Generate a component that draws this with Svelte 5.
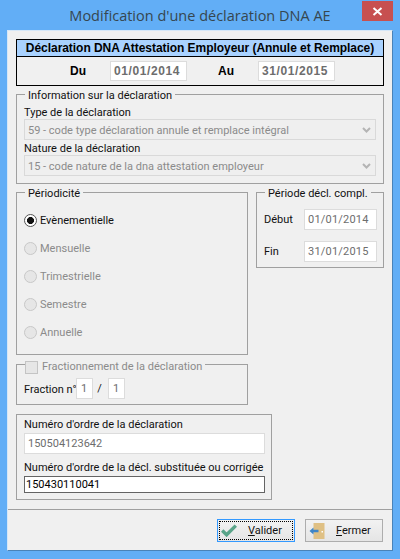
<script>
  const periods = [
    { label: 'Evènementielle', checked: true },
    { label: 'Mensuelle' },
    { label: 'Trimestrielle' },
    { label: 'Semestre' },
    { label: 'Annuelle' }
  ];
</script>

<div class="window">
  <header class="titlebar">
    <span class="title">Modification d'une déclaration DNA AE</span>
    <span class="close">
      <svg width="11" height="9" viewBox="0 0 11 9"><path d="M1.5 1 L9.5 8 M9.5 1 L1.5 8" stroke="#fff" stroke-width="2" /></svg>
    </span>
  </header>

  <div class="client">
    <div class="body">
      <section class="head">
        <h1>Déclaration DNA Attestation Employeur (Annule et Remplace)</h1>
        <div class="dates">
          <b class="du">Du</b>
          <span class="input bold">01/01/2014</span>
          <b class="au">Au</b>
          <span class="input bold">31/01/2015</span>
        </div>
      </section>

      <fieldset class="info">
        <legend>Information sur la déclaration</legend>
        <div class="lbl">Type de la déclaration</div>
        <div class="combo">
          59 - code type déclaration annule et remplace intégral
          <svg width="9" height="6" viewBox="0 0 9 6"><path d="M1 1 L4.5 4.5 L8 1" fill="none" stroke="#b4b4b4" stroke-width="2" /></svg>
        </div>
        <div class="lbl next">Nature de la déclaration</div>
        <div class="combo">
          15 - code nature de la dna attestation employeur
          <svg width="9" height="6" viewBox="0 0 9 6"><path d="M1 1 L4.5 4.5 L8 1" fill="none" stroke="#b4b4b4" stroke-width="2" /></svg>
        </div>
      </fieldset>

      <div class="columns">
        <fieldset class="period">
          <legend>Périodicité</legend>
          {#each periods as p}
            <div class="radio" class:off={!p.checked}>
              <span class="dot" class:on={p.checked}></span>{p.label}
            </div>
          {/each}
        </fieldset>
        <fieldset class="compl">
          <legend>Période décl. compl.</legend>
          <div class="row"><span>Début</span><span class="input small">01/01/2014</span></div>
          <div class="row"><span>Fin</span><span class="input small">31/01/2015</span></div>
        </fieldset>
      </div>

      <fieldset class="fraction">
        <legend><span class="check"></span>Fractionnement de la déclaration</legend>
        <div class="frow">
          <span class="fname">Fraction n°</span>
          <span class="input num">1</span>
          <span class="slash">/</span>
          <span class="input num">1</span>
        </div>
      </fieldset>

      <section class="numbers">
        <div class="lab">Numéro d'ordre de la déclaration</div>
        <div class="input wide">150504123642</div>
        <div class="lab second">Numéro d'ordre de la décl. substituée ou corrigée</div>
        <div class="input wide active">150430110041</div>
      </section>
    </div>

    <footer class="actions">
      <div class="btn focus">
        <span class="ring">
          <svg class="ico" width="16" height="13" viewBox="0 0 16 13"><path d="M1.2 6.5 L5.6 10.8 L14.8 1.6" fill="none" stroke="#5aa58a" stroke-width="3.4" /></svg>
          <span class="cap"><u>V</u>alider</span>
        </span>
      </div>
      <div class="btn">
        <span class="ring">
          <svg class="ico" width="15" height="16" viewBox="0 0 15 16">
            <rect x="4" y="0" width="11" height="16" fill="#dfc084" />
            <rect x="12" y="8" width="1.5" height="1.5" fill="#fff" />
            <path d="M0 8 L4 4.5 L4 6.8 L9 6.8 L9 9.2 L4 9.2 L4 11.5 Z" fill="#3f85c6" />
          </svg>
          <span class="cap"><u>F</u>ermer</span>
        </span>
      </div>
    </footer>
  </div>
</div>

<style>
  :global(body) {
    margin: 0;
  }
  .window {
    width: 400px;
    height: 559px;
    box-sizing: border-box;
    background: #62aef6;
    padding: 0 7px 8px;
    display: flex;
    flex-direction: column;
    font-family: Roboto, 'Liberation Sans', sans-serif;
    font-size: 11px;
    color: #111;
    position: relative;
  }
  .titlebar {
    height: 30px;
    flex: none;
    display: flex;
    justify-content: center;
    align-items: center;
  }
  .title {
    font-family: 'Open Sans', sans-serif;
    font-size: 14.5px;
    color: #36464f;
    padding-top: 1px;
  }
  .close {
    position: absolute;
    top: 1px;
    right: 7px;
    width: 31px;
    height: 20px;
    background: #c75050;
    display: flex;
    align-items: center;
    justify-content: center;
  }
  .client {
    flex: 1;
    display: flex;
    flex-direction: column;
    background: #f0f0f0;
    border: 1px solid #d5e7f8;
    border-right-color: #4a83b8;
    border-bottom-color: #4a83b8;
    min-height: 0;
  }
  .body {
    flex: 1;
    padding: 8px 8px 0;
    display: flex;
    flex-direction: column;
  }
  .head {
    height: 47px;
    flex: none;
    box-sizing: border-box;
    border: 1px solid #000;
    font-family: 'Liberation Sans', sans-serif;
    color: #000;
  }
  h1 {
    margin: 0;
    height: 17px;
    box-sizing: border-box;
    background: #a9d2ff;
    border-bottom: 1px solid #000;
    font-size: 12px;
    line-height: 16px;
    text-align: center;
    white-space: nowrap;
    letter-spacing: -0.05px;
  }
  .dates {
    height: 28px;
    display: flex;
    align-items: center;
    font-size: 12px;
    font-weight: bold;
  }
  .du {
    margin-left: 53px;
    width: 40px;
  }
  .au {
    margin-left: 31px;
    width: 40px;
  }
  .input {
    box-sizing: border-box;
    background: #fff;
    border: 1px solid #dcdcdc;
    color: #6d6d6d;
    display: inline-block;
    white-space: nowrap;
  }
  .input.bold {
    width: 77px;
    height: 20px;
    line-height: 18px;
    padding-left: 3px;
    letter-spacing: 0.6px;
  }
  fieldset {
    margin: 0;
    padding: 0;
    border: 1px solid #a0a0a0;
    min-width: 0;
    box-sizing: border-box;
    flex: none;
  }
  legend {
    padding: 4px 3px 0;
    margin-left: 1px;
    line-height: 14px;
    white-space: nowrap;
  }
  .info {
    height: 99px;
    margin-top: -1px;
    padding: 3px 7px 0;
  }
  .lbl {
    line-height: 14px;
    height: 13px;
  }
  .lbl.next {
    margin-top: 2px;
  }
  .combo {
    height: 21px;
    box-sizing: border-box;
    border: 1px solid #d9d9d9;
    background: #efefef;
    color: #8b8b8b;
    line-height: 21px;
    padding-left: 3px;
    position: relative;
    white-space: nowrap;
  }
  .combo svg {
    position: absolute;
    right: 4px;
    top: 7px;
  }
  .columns {
    display: flex;
    justify-content: space-between;
    align-items: flex-start;
    flex: none;
    margin-top: -1px;
  }
  .period {
    width: 232px;
    height: 172px;
    padding: 5px 7px 0;
  }
  .radio {
    height: 28px;
    display: flex;
    align-items: center;
    gap: 3px;
  }
  .radio.off {
    color: #8b8b8b;
  }
  .dot {
    width: 13px;
    height: 13px;
    box-sizing: border-box;
    border-radius: 50%;
    border: 1px solid #c8c8c8;
    background: #e6e6e6;
    flex: none;
  }
  .dot.on {
    border-color: #555;
    background: radial-gradient(circle, #111 0 3.2px, #fff 3.8px);
  }
  .compl {
    width: 128px;
    height: 85px;
    padding: 2px 6px 0 7px;
  }
  .row {
    height: 32px;
    display: flex;
    align-items: center;
    justify-content: space-between;
  }
  .input.small {
    width: 73px;
    height: 21px;
    line-height: 20px;
    padding-left: 3px;
    letter-spacing: 0.2px;
  }
  .fraction {
    height: 51px;
    margin-top: -1px;
    margin-bottom: 9px;
    width: 232px;
    padding: 4px 7px 0;
  }
  .fraction legend {
    padding: 6px 3px 0 0;
    margin-left: 1px;
    color: #8b8b8b;
    display: flex;
    align-items: center;
    gap: 4px;
  }
  .check {
    width: 13px;
    height: 13px;
    box-sizing: border-box;
    background: #e6e6e6;
    border: 1px solid #c4c4c4;
  }
  .frow {
    display: flex;
    align-items: center;
    height: 21px;
  }
  .fname {
    width: 52px;
    white-space: nowrap;
    padding-top: 1px;
  }
  .input.num {
    width: 17px;
    height: 21px;
    line-height: 20px;
    padding-left: 4px;
  }
  .slash {
    width: 15px;
    text-align: center;
    padding-right: 2px;
    box-sizing: border-box;
  }
  .numbers {
    width: 256px;
    height: 86px;
    flex: none;
    box-sizing: border-box;
    border: 1px solid #a0a0a0;
    padding: 3px 7px 0;
  }
  .lab {
    line-height: 14px;
    height: 15px;
    white-space: nowrap;
  }
  .lab.second {
    height: 22px;
    padding-top: 7px;
    box-sizing: border-box;
  }
  .input.wide {
    display: block;
    width: 241px;
    height: 21px;
    line-height: 20px;
    padding-left: 3px;
  }
  .input.active {
    height: 17px;
    line-height: 15px;
    border-color: #646464;
    color: #000;
    padding-left: 1px;
  }
  .actions {
    flex: none;
    height: 41px;
    box-sizing: border-box;
    border-top: 1px solid #a0a0a0;
    display: flex;
    justify-content: flex-end;
    align-items: flex-start;
    gap: 10px;
    padding: 9px 9px 0 0;
  }
  .btn {
    width: 78px;
    height: 23px;
    box-sizing: border-box;
    border: 1px solid #adadad;
    background: linear-gradient(#f2f2f2, #e5e5e5);
    padding: 1px;
    display: flex;
  }
  .btn.focus {
    border-color: #3399ff;
  }
  .ring {
    flex: 1;
    border: 1px dotted transparent;
    display: flex;
    align-items: center;
    padding-left: 1px;
  }
  .focus .ring {
    border-color: #000;
  }
  .ico {
    flex: none;
    width: 16px;
  }
  .cap {
    margin-left: 11px;
    font-size: 11px;
  }
</style>
